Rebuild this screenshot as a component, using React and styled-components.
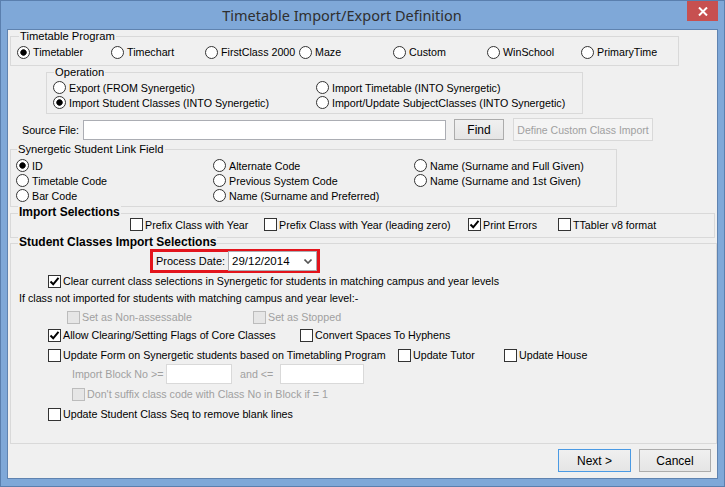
import React from 'react';
import styled, { createGlobalStyle } from 'styled-components';

const Global = createGlobalStyle`
  html, body { margin: 0; padding: 0; background: #ffffff; }
  body { font-family: "Liberation Sans", Arial, sans-serif; font-size: 10.7px; color: #000; }
  * { box-sizing: border-box; }
`;

const Window = styled.div`
  width: 725px;
  height: 487px;
  background: #7fa8d8;
  border: 1px solid #5a7fae;
  display: flex;
  flex-direction: column;
  padding: 0 6px 7px 6px;
`;

const TitleBar = styled.div`
  height: 28px;
  display: flex;
  align-items: flex-start;
`;

const Title = styled.div`
  flex: 1;
  text-align: center;
  padding-right: 10px;
  font-family: "Noto Sans", "Open Sans", sans-serif;
  font-size: 14.5px;
  line-height: 28px;
  color: #2f2f2f;
`;

const CloseButton = styled.div`
  width: 31px;
  height: 20px;
  background: #c75050;
  display: flex;
  align-items: center;
  justify-content: center;
`;

const Client = styled.div`
  flex: 1;
  background: #f0f0f0;
  border: 1px solid #5f83b0;
  display: flex;
  flex-direction: column;
`;

const Group = styled.div`
  position: relative;
  border: 1px solid #d9d9d9;
  margin-top: ${p => p.$top}px;
  margin-left: ${p => p.$left}px;
  width: ${p => p.$width}px;
  padding: ${p => p.$pad};
`;

const Legend = styled.span`
  position: absolute;
  top: ${p => (p.$bold ? -8 : -7)}px;
  left: ${p => p.$left}px;
  padding: 0 1px;
  background: #f0f0f0;
  line-height: ${p => (p.$bold ? 13 : 13)}px;
  font-size: ${p => (p.$bold ? 12 : 11.2)}px;
  font-weight: ${p => (p.$bold ? 700 : 400)};
  white-space: nowrap;
`;

const ChoiceGrid = styled.div`
  display: grid;
  grid-template-columns: ${p => p.$cols};
  grid-auto-rows: ${p => p.$row}px;
  align-items: center;
`;

const Choice = styled.label`
  display: inline-flex;
  align-items: center;
  gap: ${p => (p.$radio ? 3 : 2)}px;
  white-space: nowrap;
  color: ${p => (p.$disabled ? '#a0a0a0' : '#000')};
  width: ${p => (p.$width ? `${p.$width}px` : 'auto')};
  flex: none;
`;

const RadioCircle = styled.span`
  width: 13px;
  height: 13px;
  flex: none;
  border: 1px solid #333;
  border-radius: 50%;
  background: ${p =>
    p.$checked
      ? 'radial-gradient(circle, #000 0 2.6px, #444 3px, #fff 3.6px)'
      : '#fff'};
`;

const Box = styled.span`
  width: 13px;
  height: 13px;
  flex: none;
  border: 1px solid ${p => (p.$disabled ? '#bcbcbc' : '#333')};
  background: ${p => (p.$disabled ? '#e6e6e6' : '#fff')};
  display: flex;
  align-items: center;
  justify-content: center;
`;

const Radio = ({ checked, children }) => (
  <Choice $radio>
    <RadioCircle $checked={checked} />
    <span>{children}</span>
  </Choice>
);

const Check = ({ checked, disabled, width, children }) => (
  <Choice $disabled={disabled} $width={width}>
    <Box $disabled={disabled}>
      {checked && (
        <svg width="11" height="11" viewBox="0 0 11 11">
          <path d="M1.5 5.5 L4.2 8.3 L9.5 1.8" fill="none" stroke="#000" strokeWidth="2" />
        </svg>
      )}
    </Box>
    <span>{children}</span>
  </Choice>
);

const SourceRow = styled.div`
  display: flex;
  align-items: center;
  height: 23px;
  margin-top: 4px;
  padding-left: 14px;
`;

const FieldLabel = styled.span`
  width: ${p => p.$width}px;
  flex: none;
  white-space: nowrap;
  color: ${p => (p.$disabled ? '#a0a0a0' : '#000')};
  margin-left: ${p => p.$left || 0}px;
`;

const TextBox = styled.div`
  width: ${p => p.$width}px;
  height: 20px;
  flex: none;
  background: #fff;
  border: 1px solid ${p => (p.$disabled ? '#d9d9d9' : '#abadb3')};
`;

const Button = styled.div`
  width: ${p => p.$width}px;
  height: ${p => p.$height}px;
  margin-left: ${p => p.$left}px;
  flex: none;
  display: flex;
  align-items: center;
  justify-content: center;
  white-space: nowrap;
  font-size: ${p => (p.$big ? 12 : 10.5)}px;
  color: ${p => (p.$disabled ? '#a0a0a0' : '#000')};
  border: 1px solid ${p => (p.$default ? '#4a9ae4' : p.$disabled ? '#d9d9d9' : '#acacac')};
  background: ${p =>
    p.$disabled ? '#f4f4f4' : 'linear-gradient(#f0f0f0, #e5e5e5)'};
`;

const Row = styled.div`
  display: flex;
  align-items: center;
  height: ${p => p.$h || 14}px;
  margin-top: ${p => p.$top}px;
  padding-left: ${p => p.$indent}px;
  color: ${p => (p.$disabled ? '#a0a0a0' : '#000')};
  white-space: nowrap;
`;

const ProcessBox = styled.div`
  margin-top: 5px;
  margin-left: 139px;
  width: 170px;
  height: 24px;
  border: 3px solid #e3141c;
  display: flex;
  align-items: center;
  padding-left: 2px;
  white-space: nowrap;
`;

const ProcessLabel = styled.span`
  width: 73px;
  flex: none;
  padding-left: 1px;
  font-size: 11px;
`;

const Combo = styled.div`
  width: 89px;
  height: 20px;
  flex: none;
  background: #fff;
  border: 1px solid #abadb3;
  display: flex;
  align-items: center;
  justify-content: space-between;
  padding: 0 4px 0 3px;
  font-size: 11.5px;
`;

const Footer = styled.div`
  display: flex;
  justify-content: flex-end;
  margin-top: 5px;
  padding-right: 6px;
`;

export default function App() {
  return (
    <>
      <Global />
      <Window>
        <TitleBar>
          <Title>Timetable Import/Export Definition</Title>
          <CloseButton>
            <svg width="10" height="9" viewBox="0 0 10 9">
              <path d="M1 0.5 L9 8.5 M9 0.5 L1 8.5" stroke="#fff" strokeWidth="2" />
            </svg>
          </CloseButton>
        </TitleBar>
        <Client>
          <Group $top={6} $left={2} $width={669} $pad="8px 0 6px 6px">
            <Legend $left={8}>Timetable Program</Legend>
            <ChoiceGrid $cols="94px 94px 94px 94px 94px 94px auto" $row={14}>
              <Radio checked>Timetabler</Radio>
              <Radio>Timechart</Radio>
              <Radio>FirstClass 2000</Radio>
              <Radio>Maze</Radio>
              <Radio>Custom</Radio>
              <Radio>WinSchool</Radio>
              <Radio>PrimaryTime</Radio>
            </ChoiceGrid>
          </Group>

          <Group $top={6} $left={38} $width={537} $pad="7px 0 3px 6px">
            <Legend $left={7}>Operation</Legend>
            <ChoiceGrid $cols="263px auto" $row={15}>
              <Radio>Export (FROM Synergetic)</Radio>
              <Radio>Import Timetable (INTO Synergetic)</Radio>
              <Radio checked>Import Student Classes (INTO Synergetic)</Radio>
              <Radio>Import/Update SubjectClasses (INTO Synergetic)</Radio>
            </ChoiceGrid>
          </Group>

          <SourceRow>
            <FieldLabel $width={61}>Source File:</FieldLabel>
            <TextBox $width={363} />
            <Button $width={50} $height={21} $left={8} $big>Find</Button>
            <Button $width={140} $height={23} $left={9} $disabled>Define Custom Class Import</Button>
          </SourceRow>

          <Group $top={8} $left={2} $width={607} $pad="8px 0 3px 5px">
            <Legend $left={6}>Synergetic Student Link Field</Legend>
            <ChoiceGrid $cols="197px 201px auto" $row={15}>
              <Radio checked>ID</Radio>
              <Radio>Alternate Code</Radio>
              <Radio>Name (Surname and Full Given)</Radio>
              <Radio>Timetable Code</Radio>
              <Radio>Previous System Code</Radio>
              <Radio>Name (Surname and 1st Given)</Radio>
              <Radio>Bar Code</Radio>
              <Radio>Name (Surname and Preferred)</Radio>
            </ChoiceGrid>
          </Group>

          <Group $top={6} $left={2} $width={705} $pad="4px 0 6px 119px">
            <Legend $bold $left={7}>Import Selections</Legend>
            <ChoiceGrid $cols="134px 204px 90px auto" $row={13}>
              <Check>Prefix Class with Year</Check>
              <Check>Prefix Class with Year (leading zero)</Check>
              <Check checked>Print Errors</Check>
              <Check>TTabler v8 format</Check>
            </ChoiceGrid>
          </Group>

          <Group $top={5} $left={2} $width={707} $pad="0 0 22px 0">
            <Legend $bold $left={7}>Student Classes Import Selections</Legend>
            <ProcessBox>
              <ProcessLabel>Process Date:</ProcessLabel>
              <Combo>
                <span>29/12/2014</span>
                <svg width="8" height="5" viewBox="0 0 8 5">
                  <path d="M0.5 0.5 L4 4 L7.5 0.5" fill="none" stroke="#555" strokeWidth="1.6" />
                </svg>
              </Combo>
            </ProcessBox>
            <Row $top={1} $indent={37}>
              <Check checked>Clear current class selections in Synergetic for students in matching campus and year levels</Check>
            </Row>
            <Row $top={3} $indent={8}>
              If class not imported for students with matching campus and year level:-
            </Row>
            <Row $top={5} $indent={56}>
              <Check disabled width={186}>Set as Non-assessable</Check>
              <Check disabled>Set as Stopped</Check>
            </Row>
            <Row $top={4} $indent={37}>
              <Check checked width={252}>Allow Clearing/Setting Flags of Core Classes</Check>
              <Check>Convert Spaces To Hyphens</Check>
            </Row>
            <Row $top={6} $indent={37}>
              <Check width={350}>Update Form on Synergetic students based on Timetabling Program</Check>
              <Check width={106}>Update Tutor</Check>
              <Check>Update House</Check>
            </Row>
            <Row $top={2} $indent={61} $h={20}>
              <FieldLabel $width={94} $disabled>Import Block No &gt;=</FieldLabel>
              <TextBox $width={66} $disabled />
              <FieldLabel $width={40} $left={8} $disabled>and &lt;=</FieldLabel>
              <TextBox $width={84} $disabled />
            </Row>
            <Row $top={3} $indent={61}>
              <Check disabled>Don't suffix class code with Class No in Block if = 1</Check>
            </Row>
            <Row $top={6} $indent={37}>
              <Check>Update Student Class Seq to remove blank lines</Check>
            </Row>
          </Group>

          <Footer>
            <Button $width={73} $height={23} $left={0} $default $big>Next &gt;</Button>
            <Button $width={72} $height={23} $left={8} $big>Cancel</Button>
          </Footer>
        </Client>
      </Window>
    </>
  );
}
